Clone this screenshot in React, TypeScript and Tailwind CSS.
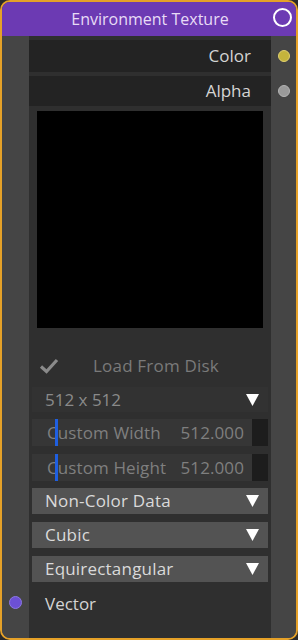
import React from "react"

const font = { fontFamily: '"Open Sans", "Noto Sans", sans-serif' }

function Tri() {
  return (
    <svg width="13" height="12" viewBox="0 0 13 12" className="shrink-0">
      <polygon points="0,0 13,0 6.5,12" fill="#ffffff" />
    </svg>
  )
}

function Row({ left, right, children, className = "" }: { left?: React.ReactNode; right?: React.ReactNode; children?: React.ReactNode; className?: string }) {
  return (
    <div className={`grid grid-cols-[27px_242px_25px] ${className}`}>
      <div className="bg-[#454545] flex items-center justify-center">{left}</div>
      <div className="bg-[#2f2f2f] flex flex-col">{children}</div>
      <div className="bg-[#454545] flex items-center justify-center">{right}</div>
    </div>
  )
}

function Dropdown({ label }: { label: string }) {
  return (
    <div className="mx-[3px] h-[26px] bg-[#535353] flex items-center pl-[13px] pr-[9px] text-[17px] text-[#dadada]">
      <span className="flex-1 tracking-[0.2px]">{label}</span>
      <Tri />
    </div>
  )
}

function NumField({ label, value }: { label: string; value: string }) {
  return (
    <div className="mx-[3px] h-[27px] flex">
      <div className="flex-1 bg-[#363636] relative flex items-center pl-[15px] text-[17px] text-[#7f7f7f] tracking-[0.1px]">
        <div className="absolute left-[23px] top-0 h-full w-[3px] bg-[#1f5fe0]" />
        <span className="flex-1">{label}</span>
        <span className="pr-[8px]">{value}</span>
      </div>
      <div className="w-[16px] bg-[#1d1d1d]" />
    </div>
  )
}

export default function App() {
  return (
    <div className="w-[298px] h-[640px] bg-[#2a2a2a]" style={font}>
      <div className="w-full h-full border-2 border-[#e5a128] rounded-[10px] overflow-hidden flex flex-col bg-[#454545]">
        {/* header */}
        <div className="h-[34px] bg-[#6c3ab3] flex items-center relative">
          <span className="flex-1 text-center text-[16px] text-[#e8dcf6] pl-[2px]">Environment Texture</span>
          <div className="absolute right-[4px] top-[6px] w-[19px] h-[19px] rounded-full border-[2.5px] border-white" />
        </div>

        <Row className="h-[4px]" />
        <Row
          className="h-[32px]"
          right={<div className="w-[12px] h-[12px] rounded-full bg-[#c4b43c] border border-[#e0d070]" />}
        >
          <div className="h-full bg-[#232323] flex items-center justify-end pr-[20px] text-[17px] text-[#d4d4d4]">Color</div>
        </Row>
        <Row className="h-[4px]" />
        <Row
          className="h-[30px]"
          right={<div className="w-[12px] h-[12px] rounded-full bg-[#9a9a9a] border border-[#b4b4b4]" />}
        >
          <div className="h-full bg-[#232323] flex items-center justify-end pr-[20px] text-[17px] text-[#d4d4d4]">Alpha</div>
        </Row>

        <Row className="flex-1">
          <div className="flex flex-col h-full">
            <div className="mt-[5px] mx-[8px] h-[217px] bg-black" />
            <div className="h-[26px] mt-[25px] flex items-center text-[17px] text-[#7a7a7a]">
              <svg width="20" height="16" viewBox="0 0 20 16" className="ml-[10px]">
                <path d="M2 8.5 L7.5 13.5 L18 2" stroke="#8a8a8a" strokeWidth="3.2" fill="none" />
              </svg>
              <span className="ml-[34px] tracking-[0.2px]">Load From Disk</span>
            </div>
            <div className="mx-[3px] mt-[8px] h-[25px] bg-[#323232] flex items-center pl-[13px] pr-[9px] text-[17px] text-[#8a8a8a]">
              <span className="flex-1">512 x 512</span>
              <Tri />
            </div>
            <div className="mt-[7px]" />
            <NumField label="Custom Width" value="512.000" />
            <div className="mt-[8px]" />
            <NumField label="Custom Height" value="512.000" />
            <div className="mt-[7px]" />
            <Dropdown label="Non-Color Data" />
            <div className="mt-[8px]" />
            <Dropdown label="Cubic" />
            <div className="mt-[8px]" />
            <Dropdown label="Equirectangular" />
          </div>
        </Row>

        <Row
          className="h-[54px]"
          left={<div className="w-[13px] h-[13px] rounded-full bg-[#6c50d4] border border-[#8c78e4] mb-[18px]" />}
        >
          <div className="h-full flex pt-[7px] pl-[16px] text-[17px] text-[#d4d4d4]">Vector</div>
        </Row>
      </div>
    </div>
  )
}
